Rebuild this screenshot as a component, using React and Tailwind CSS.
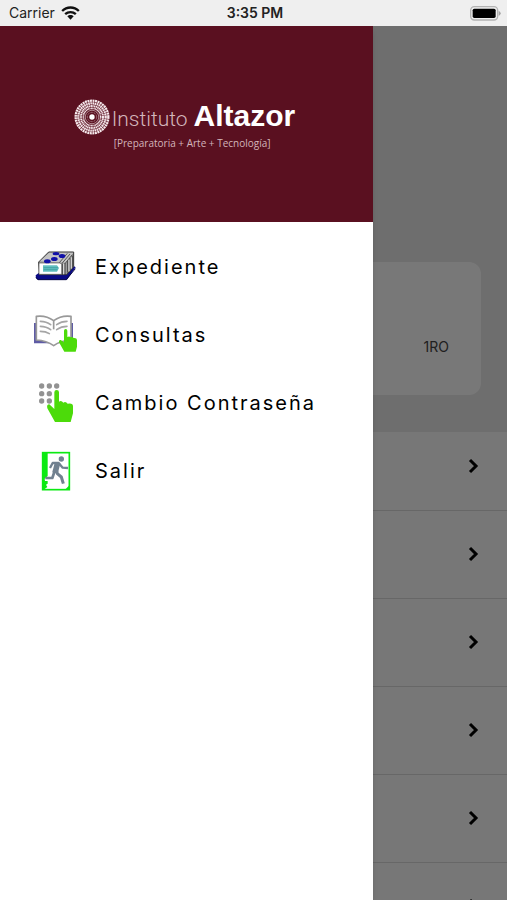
import React from 'react';

const WifiIcon = () => (
    <svg viewBox="0 0 56 42" className="w-[19px] h-[14px]" fill="none" stroke="#111" strokeWidth="7" aria-hidden="true">
        <path d="M3 15C17 1 39 1 53 15" />
        <path d="M12 24.500C21 16 35 16 44 24.500" />
        <path d="M18.500 31C23.500 25.500 32.500 25.500 37.500 31L28 41Z" fill="#111" stroke="none" />
    </svg>
);

const BatteryIcon = () => (
    <svg viewBox="0 0 93 45" className="w-[31px] h-[15px]" aria-hidden="true">
        <rect x="2" y="2" width="81" height="40" rx="11" fill="#efefef" stroke="#b3b3b3" strokeWidth="4" />
        <rect x="8" y="8" width="69" height="28" rx="5" fill="#000" />
        <path d="M86 14Q92 17 92 22T86 30Z" fill="#a3a3a3" />
    </svg>
);

const FilesIcon = () => (
    <svg viewBox="39 15 132 132" className="size-11" aria-hidden="true">
        <path d="M47 106L57 98H138L157 76L167 82L141 119H52Q46 114 47 106Z" fill="#0a0a86" />
        <path d="M48 112L54 119H139L166 86" fill="none" stroke="#050540" strokeWidth="3" />
        <path d="M56 66L86 36H161V80L140 104H58Z" fill="#9b9b9b" stroke="#333" strokeWidth="3" />
        <path d="M60 64L88 38H160L138 68Z" fill="#c4c4c4" />
        <path d="M118 68L142 40M126 70L150 42M134 72L157 44" stroke="#555" strokeWidth="3" />
        <path d="M127 71V103M135 70V103M143 62V98M150 54V90M157 47V82" stroke="#454545" strokeWidth="3" />
        <path d="M131 71V103M147 59V94M154 52V86" stroke="#e0e0e0" strokeWidth="3" />
        <path d="M57 69H121L125 74V103H57Z" fill="#fff" stroke="#555" strokeWidth="2" />
        <path d="M69 76H111L117 84L111 95H69Z" fill="#62bfc0" />
        <path d="M71 83H114M71 89H112" stroke="#349599" strokeWidth="2" />
        <g fill="#1010a8">
            <ellipse cx="82" cy="64" rx="10" ry="6" />
            <ellipse cx="103" cy="57" rx="10" ry="6" />
            <ellipse cx="126" cy="48" rx="10" ry="6" />
            <ellipse cx="108" cy="41" rx="10" ry="5" />
        </g>
    </svg>
);

const BookIcon = () => (
    <svg viewBox="39 219 132 132" className="size-11" aria-hidden="true">
        <path d="M42 249H50V300H86L100 310H42Z" fill="#5e5ba5" />
        <path d="M152 249H159V294H152Z" fill="#5e5ba5" />
        <path d="M49 229Q78 225 101 242Q124 225 153 229V300Q122 302 101 317Q80 302 49 300Z" fill="#fff" stroke="#999" strokeWidth="5" strokeLinejoin="round" />
        <path d="M101 242V268" stroke="#999" strokeWidth="5" />
        <g fill="none" stroke="#a5a5a5" strokeWidth="5" strokeLinecap="round">
            <path d="M61 244Q79 244 92 254M61 259Q79 259 92 269M61 274Q77 274 88 281" />
            <path d="M141 244Q124 244 110 254M141 259Q124 259 110 269" />
        </g>
        <path d="M132 272Q132 267 137 267T142 272V291Q148 287 152 292Q157 289 161 294Q171 293 171 300V320L167 335H133L117 307Q116 299 122 300L132 307Z" fill="#4cdb0a" />
    </svg>
);

const KeypadIcon = () => (
    <svg viewBox="39 33 132 132" className="size-11" aria-hidden="true">
        <g fill="#929292">
            <circle cx="65" cy="48" r="8" />
            <circle cx="88" cy="48" r="8" />
            <circle cx="110" cy="48" r="8" />
            <circle cx="65" cy="71" r="8" />
            <circle cx="88" cy="71" r="8" />
            <circle cx="65" cy="93" r="8" />
            <circle cx="88" cy="93" r="8" />
        </g>
        <path d="M103 67Q103 60 110 60T117 67V95Q124 90 130 98Q137 93 143 101Q159 98 159 109V130L152 156H105L82 115Q79 103 88 103L103 117Z" fill="#4cdb0a" />
    </svg>
);

const ExitIcon = () => (
    <svg viewBox="39 237 132 132" className="size-11" aria-hidden="true">
        <rect x="68" y="248" width="80" height="111" fill="#fff" stroke="#0bea12" strokeWidth="5" />
        <path d="M66 246H83V318L74 326L75 333H83V341L78 344L82 351L70 360H66Z" fill="#0bea12" />
        <path d="M134 360L150 344V360Z" fill="#0bea12" />
        <circle cx="124" cy="267" r="8" fill="#718190" />
        <g fill="none" stroke="#718190" strokeLinejoin="round">
            <path d="M90 294L98 279H116L128 293L144 294" strokeWidth="7" />
            <path d="M104 303L97 324H76" strokeWidth="8" />
            <path d="M109 299L112 311L124 321L130 341" strokeWidth="9" />
            <path d="M113 278L105 309" strokeWidth="17" />
        </g>
    </svg>
);

// Concentric rings of dots around a bright centre
const LogoMark = () => (
    <svg viewBox="0 0 108 108" className="w-9 h-9" fill="none" aria-hidden="true">
        <g stroke="#f6e9ec">
            <circle cx="54" cy="54" r="49" strokeWidth="7" strokeDasharray="6 1.700" />
            <circle cx="54" cy="54" r="41" strokeWidth="7" strokeDasharray="5 1.440" />
            <circle cx="54" cy="54" r="33" strokeWidth="6" strokeDasharray="4 1.184" />
            <circle cx="54" cy="54" r="26" strokeWidth="5" strokeDasharray="3 1.084" />
            <circle cx="54" cy="54" r="20" strokeWidth="3" strokeDasharray="2 1.141" />
            <circle cx="54" cy="54" r="14" strokeWidth="2" strokeDasharray="2 2.398" />
        </g>
        <circle cx="54" cy="54" r="8" fill="#fff" />
    </svg>
);

const ChevronIcon = () => (
    <svg viewBox="0 0 24 24" className="size-6" fill="none" stroke="#000" strokeWidth="3" aria-hidden="true">
        <path d="M9 6L15 12L9 18" />
    </svg>
);

const menuItems = [
    { label: 'Expediente', Icon: FilesIcon },
    { label: 'Consultas', Icon: BookIcon },
    { label: 'Cambio Contraseña', Icon: KeypadIcon },
    { label: 'Salir', Icon: ExitIcon },
];

const rows = [1, 2, 3, 4, 5, 6];

const StatusBar = () => (
    <div className="grid grid-cols-3 items-center h-[26px] shrink-0 pl-[9px] pr-[6px] bg-[#efefef] text-sm text-[#222]">
        <div className="flex items-center gap-[6px]">
            <span>Carrier</span>
            <WifiIcon />
        </div>
        <span className="text-center font-semibold">3:35 PM</span>
        <div className="flex justify-end">
            <BatteryIcon />
        </div>
    </div>
);

const Page = () => (
    <div className="min-h-full bg-[#eaeaea]">
        <div className="px-[26px] pt-[236px] pb-[37px]">
            <div className="flex items-center justify-end h-[133px] pt-9 pr-8 rounded-xl bg-white">
                <span className="text-sm text-[#444]">1RO</span>
            </div>
        </div>
        <ul className="bg-[#fcfcfc]">
            {rows.map((row) => (
                <li key={row} className="border-b border-[#dcdcdc]">
                    <button
                        aria-label="Abrir"
                        className={`flex justify-end w-full pr-[22px] pb-8 ${row === 1 ? 'pt-[22px]' : 'pt-[31px]'}`}
                    >
                        <ChevronIcon />
                    </button>
                </li>
            ))}
        </ul>
    </div>
);

const Drawer = () => (
    <aside className="absolute inset-y-0 left-0 w-[373px] max-w-full bg-white shadow-md">
        <div className="flex flex-col items-center justify-center h-[196px] pr-1 pb-[2px] bg-[#5a1020]">
            <div className="flex flex-col">
                <div className="flex items-center gap-[2px]">
                    <LogoMark />
                    <div className="flex items-baseline gap-[6px] leading-9">
                        <span className="font-['Roboto',sans-serif] font-light text-[21px] text-[#d3b5bb]">Instituto</span>
                        <span className="font-['Liberation_Sans',Arial,sans-serif] font-bold text-[30px] text-white">Altazor</span>
                    </div>
                </div>
                <span className="pl-10 font-['Open_Sans',sans-serif] font-normal text-[10px] leading-3 text-[#d3b5bb]">
                    [Preparatoria + Arte + Tecnología]
                </span>
            </div>
        </div>
        <nav className="pt-[11px]">
            {menuItems.map(({ label, Icon }) => (
                <a key={label} href="#" className="flex items-center gap-[18px] h-[68px] pl-[33px]">
                    <Icon />
                    <span className="text-xl tracking-widest text-black">{label}</span>
                </a>
            ))}
        </nav>
    </aside>
);

const App = () => (
    <div className="flex flex-col h-screen overflow-hidden font-['Inter',sans-serif]">
        <StatusBar />
        <main className="relative flex-1 overflow-hidden">
            <Page />
            <div className="absolute inset-0 bg-black/53" />
            <Drawer />
        </main>
    </div>
);

export default App;
